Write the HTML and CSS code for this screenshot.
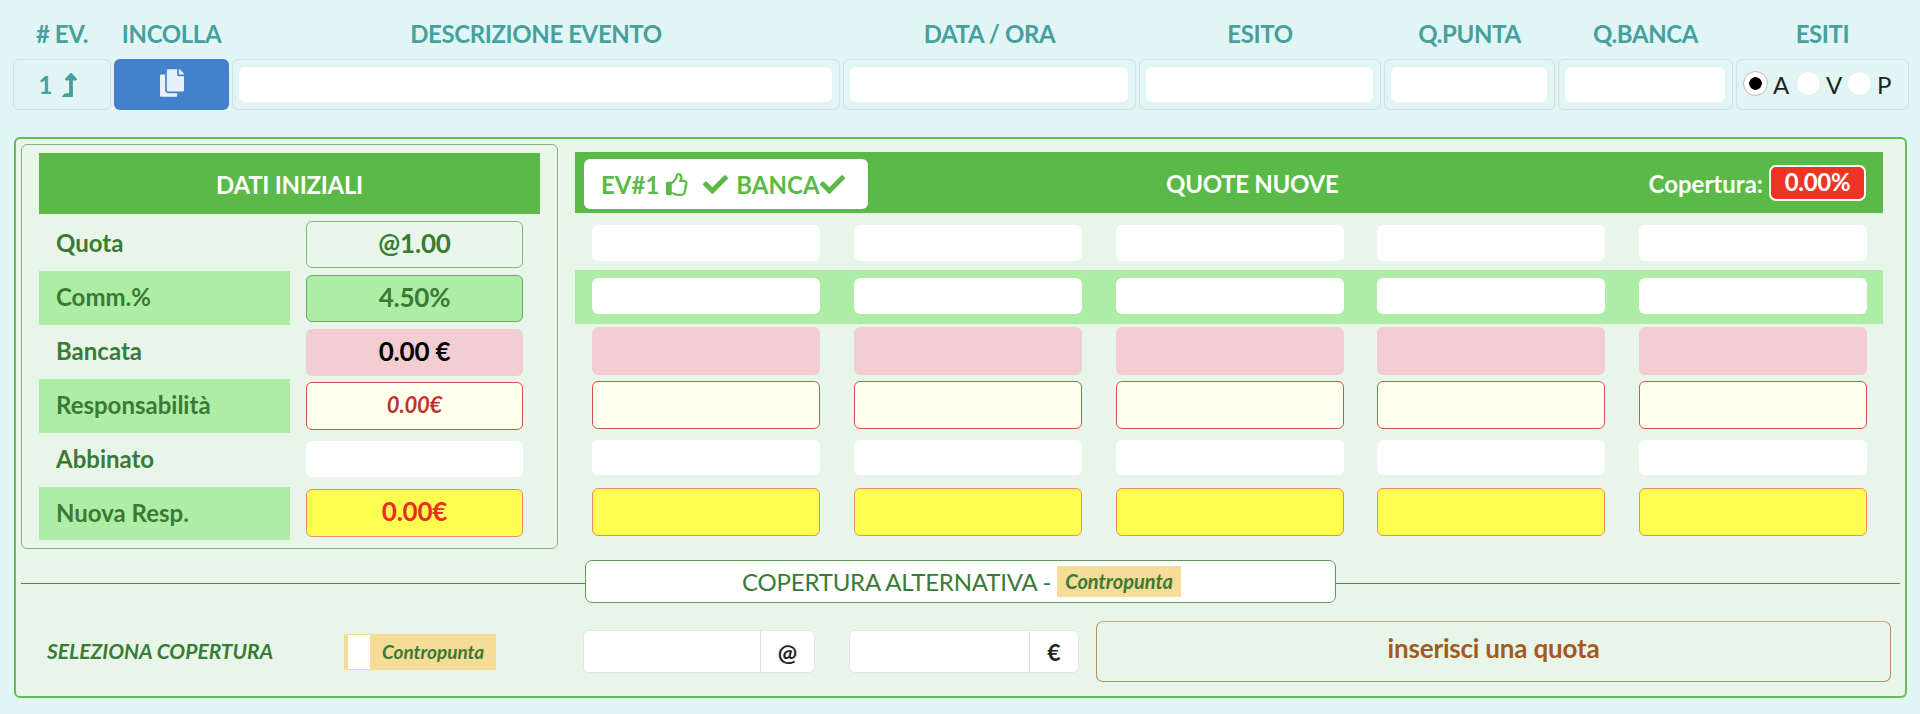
FILE: index.html
```html
<!DOCTYPE html>
<html lang="it">
<head>
  <meta charset="UTF-8">
  <title>Copertura eventi</title>
  <link rel="stylesheet" href="styles.css">
</head>
<body>
  <div class="event-table">
    <div class="event-head">
      <span># EV.</span>
      <span>INCOLLA</span>
      <span>DESCRIZIONE EVENTO</span>
      <span>DATA / ORA</span>
      <span>ESITO</span>
      <span>Q.PUNTA</span>
      <span>Q.BANCA</span>
      <span>ESITI</span>
    </div>
    <div class="event-row">
      <div class="cell cell-num">1
        <svg class="icon-level" viewBox="0 0 320 512"><path d="M313.553 119.669L209.587 7.666c-9.485-10.214-25.676-10.229-35.174 0L70.438 119.669C56.232 134.969 67.062 160 88.025 160H152v272H68.024a11.996 11.996 0 0 0-8.485 3.515l-56 56C-4.021 499.074 1.333 512 12.024 512H208c13.255 0 24-10.745 24-24V160h63.966c20.878 0 31.851-24.969 17.587-40.331z"/></svg>
      </div>
      <button class="paste-btn" type="button">
        <svg class="icon-copy" viewBox="0 0 448 512"><path d="M320 448v40c0 13.255-10.745 24-24 24H24c-13.255 0-24-10.745-24-24V120c0-13.255 10.745-24 24-24h72v296c0 30.879 25.121 56 56 56h168zm0-344V0H152c-13.255 0-24 10.745-24 24v368c0 13.255 10.745 24 24 24h272c13.255 0 24-10.745 24-24V128H344c-13.2 0-24-10.8-24-24zm120.971-31.029L375.029 7.029A24 24 0 0 0 358.059 0H352v96h96v-6.059a24 24 0 0 0-7.029-16.97z"/></svg>
      </button>
      <div class="cell"><input type="text"></div>
      <div class="cell"><input type="text"></div>
      <div class="cell"><input type="text"></div>
      <div class="cell"><input type="text"></div>
      <div class="cell"><input type="text"></div>
      <div class="cell cell-esiti">
        <input class="radio" type="radio" name="esito" checked><label>A</label>
        <input class="radio" type="radio" name="esito"><label>V</label>
        <input class="radio" type="radio" name="esito"><label>P</label>
      </div>
    </div>
  </div>

  <div class="panel">
    <div class="panel-top">
      <div class="initial-box">
        <div class="bar bar-center">DATI INIZIALI</div>
        <div class="data-row"><div class="data-label">Quota</div><div class="val val-quota">@1.00</div></div>
        <div class="data-row"><div class="data-label band">Comm.%</div><div class="val val-comm">4.50%</div></div>
        <div class="data-row"><div class="data-label">Bancata</div><div class="val val-bank">0.00 €</div></div>
        <div class="data-row"><div class="data-label band">Responsabilità</div><div class="val val-resp up1">0.00€</div></div>
        <div class="data-row"><div class="data-label">Abbinato</div><div class="val val-match"></div></div>
        <div class="data-row last"><div class="data-label band">Nuova Resp.</div><div class="val val-new">0.00€</div></div>
      </div>

      <div class="quotes">
        <div class="bar bar-quotes">
          <div class="ev-badge">EV#1
            <svg class="icon-thumb" viewBox="0 0 512 512"><path d="M466.27 286.69C475.04 271.84 480 256 480 236.85c0-44.015-37.218-85.58-85.82-85.58H357.7c4.92-12.81 8.85-28.13 8.85-46.54C366.55 31.936 328.86 0 271.28 0c-61.607 0-58.093 94.933-71.76 108.6-22.747 22.747-49.615 66.447-68.76 83.4H32c-17.673 0-32 14.327-32 32v240c0 17.673 14.327 32 32 32h64c14.893 0 27.408-10.174 30.978-23.95 44.509 1.001 75.06 39.94 177.802 39.94 7.22 0 15.22.01 22.22.01 77.117 0 111.986-39.423 111.034-95.33 13.319-18.425 20.299-43.122 17.34-66.99 9.854-18.452 13.664-40.343 8.99-62.99zm-61.75 53.83c12.56 21.13 1.26 49.41-13.94 57.57 7.7 48.78-17.608 65.9-53.12 65.9h-37.82c-71.639 0-118.029-37.82-171.64-37.82V240h10.92c28.36 0 67.98-70.89 94.54-97.46 28.36-28.36 18.91-75.63 37.82-94.54 47.27 0 47.27 32.98 47.27 56.73 0 39.17-28.36 56.72-28.36 94.54h103.99c20.64 0 36.89 18.49 36.98 37 .09 18.5-12.55 37-31.46 37 14 10 18 50 4.8 67.25z"/></svg>
            <svg class="icon-check first" viewBox="0 0 512 512"><path d="M173.898 439.404l-166.4-166.4c-9.997-9.997-9.997-26.206 0-36.204l36.203-36.204c9.997-9.998 26.207-9.998 36.204 0L192 312.69 432.095 72.596c9.997-9.997 26.207-9.997 36.204 0l36.203 36.204c9.997 9.997 9.997 26.206 0 36.204l-294.4 294.401c-9.998 9.997-26.207 9.997-36.204-.001z"/></svg>
            BANCA<svg class="icon-check" viewBox="0 0 512 512"><path d="M173.898 439.404l-166.4-166.4c-9.997-9.997-9.997-26.206 0-36.204l36.203-36.204c9.997-9.998 26.207-9.998 36.204 0L192 312.69 432.095 72.596c9.997-9.997 26.207-9.997 36.204 0l36.203 36.204c9.997 9.997 9.997 26.206 0 36.204l-294.4 294.401c-9.998 9.997-26.207 9.997-36.204-.001z"/></svg>
          </div>
          <div class="bar-title">QUOTE NUOVE</div>
          <div class="coverage">Copertura: <span class="coverage-pct">0.00%</span></div>
        </div>
        <div class="q-row q-plain"><input type="text"><input type="text"><input type="text"><input type="text"><input type="text"></div>
        <div class="q-row q-band"><input type="text"><input type="text"><input type="text"><input type="text"><input type="text"></div>
        <div class="q-row q-bank"><div></div><div></div><div></div><div></div><div></div></div>
        <div class="q-row q-resp"><div></div><div></div><div></div><div></div><div></div></div>
        <div class="q-row q-match"><div></div><div></div><div></div><div></div><div></div></div>
        <div class="q-row q-new"><div></div><div></div><div></div><div></div><div></div></div>
      </div>
    </div>

    <div class="alt-divider">
      <div class="alt-line"></div>
      <div class="alt-title">COPERTURA ALTERNATIVA - <span class="tag">Contropunta</span></div>
      <div class="alt-line"></div>
    </div>

    <div class="alt-row">
      <div class="alt-label">SELEZIONA COPERTURA</div>
      <div class="switch"><span class="knob"></span><span class="switch-text">Contropunta</span></div>
      <div class="group group-quota"><input type="text"><span>@</span></div>
      <div class="group group-euro"><input type="text"><span>€</span></div>
      <div class="result">inserisci una quota</div>
    </div>
  </div>
</body>
</html>
```

FILE: styles.css
```css
* { box-sizing: border-box; }
body { margin: 0; background: #e2f5f5; font-family: "Lato", sans-serif; font-weight: 700; color: #3a7a35; }
input { display: block; margin: 0; border: 0; outline: 0; background: #fff; border-radius: 6px; }

/* riga evento */
.event-table { padding: 0 11px 0 13px; }
.event-head, .event-row { display: grid; grid-template-columns: 98px 115px 608px 293px 242px 171px 175px 173px; column-gap: 3px; }
.event-head { height: 59px; padding-top: 20px; color: #45a09e; font-size: 24px; line-height: 27px; text-align: center; letter-spacing: -0.4px; }
.event-row { height: 51px; }
.cell { display: flex; align-items: center; padding: 0 7px 0 6px; border: 1px solid #d3dfe0; border-radius: 6px; }
.cell input { width: 100%; height: 35px; }
.cell-num { justify-content: center; gap: 10px; padding-right: 14px; color: #45a09e; font-size: 24px; }
.icon-level { width: 15px; height: 24px; margin-top: 1px; fill: #45a09e; }
.paste-btn { display: flex; align-items: center; justify-content: center; padding: 0 0 4px; border: 0; border-radius: 6px; background: #4481cc; }
.icon-copy { width: 24px; height: 28px; fill: #e8f0fb; }
.cell-esiti { padding: 0 0 0 6px; color: #222; font-size: 24px; font-weight: 400; }
.cell-esiti label { width: 23px; margin-left: 5px; margin-top: -1px; }
.cell-esiti label:nth-of-type(2) { width: 21px; }
.cell input.radio { appearance: none; flex: none; width: 25px; height: 25px; margin: -3px 0 0; border: 1px solid #e6ecec; border-radius: 50%; background: #fff; }
.cell input.radio:checked { border-color: #bbb; background: radial-gradient(circle, #000 0 6px, #fff 6.6px); }

/* pannello */
.panel { height: 561px; margin: 27px 13px 0 14px; padding: 5px 5px 0; border: 2px solid #62bd58; border-radius: 6px; background: #e8f6e9; }
.panel-top { display: flex; gap: 17px; }
.bar { background: #5ab947; color: #fff; font-size: 24px; letter-spacing: -0.3px; }
.bar-center { display: flex; align-items: center; justify-content: center; height: 61px; padding-top: 2px; }

.initial-box { width: 537px; height: 405px; padding: 8px 17px 0; border: 1px solid #86b085; border-radius: 6px; }
.initial-box .bar { margin-bottom: 3px; }
.data-row { display: flex; gap: 16px; height: 54px; }
.data-row.last { height: 53px; }
.data-label { display: flex; align-items: center; width: 251px; padding: 0 0 3px 17px; font-size: 24px; }
.band { background: #aeeda6; }
.val { display: flex; align-items: center; justify-content: center; width: 217px; height: 47px; margin-top: 4px; padding-bottom: 4px; border: 1px solid transparent; border-radius: 6px; font-size: 26px; letter-spacing: -0.2px; }
.val-quota { border-color: #86b085; }
.val-comm { background: #aeeda6; border-color: #6ea56a; }
.val-bank { background: #f2cdd2; color: #000; }
.val-resp { background: #ffffee; border-color: #d2534a; color: #c0322d; font-size: 22px; font-style: italic; }
.up1 { height: 48px; margin-top: 3px; }
.val-match { height: 36px; margin-top: 8px; background: #fff; }
.val-new { height: 48px; margin-top: 2px; background: #ffff50; border-color: #ef8a6a; color: #ea2e24; }

/* quote nuove */
.quotes { width: 1308px; margin-top: 8px; }
.bar-quotes { display: flex; align-items: center; height: 61px; padding: 0 17px 0 9px; }
.ev-badge { display: flex; align-items: center; flex: none; width: 284px; height: 50px; margin-top: 3px; padding-left: 17px; border-radius: 6px; background: #fff; color: #5ab947; letter-spacing: 0; }
.icon-thumb { width: 23px; height: 23px; margin-left: 7px; fill: #5ab947; }
.icon-check { width: 25px; height: 25px; fill: #5ab947; }
.icon-check.first { margin: 0 8px 0 14px; }
.bar-title { flex: 1; padding-right: 12px; padding-top: 2px; text-align: center; }
.coverage { display: flex; align-items: center; gap: 6px; padding-top: 1px; font-size: 24px; letter-spacing: 0; }
.coverage-pct { display: block; width: 97px; height: 36px; border: 2px solid #fff; border-radius: 7px; background: #ee3524; text-align: center; line-height: 30px; font-size: 24px; letter-spacing: -0.3px; }

.q-row { display: grid; grid-template-columns: repeat(5, 228px); column-gap: 33.75px; padding-left: 17px; }
.q-row input, .q-row div { width: 100%; border-radius: 6px; }
.q-plain { padding-top: 12px; padding-bottom: 9px; }
.q-plain input, .q-band input { height: 36px; }
.q-band { padding-top: 8px; padding-bottom: 10px; background: #aeeda6; }
.q-bank { padding-top: 3px; padding-bottom: 3px; }
.q-bank div { height: 48px; background: #f2cdd2; }
.q-resp { padding-top: 3px; padding-bottom: 3px; }
.q-resp div { height: 48px; background: #ffffee; border: 1px solid #d2534a; }
.q-match { padding-top: 8px; padding-bottom: 13px; }
.q-match div { height: 35px; background: #fff; }
.q-new div { height: 48px; background: #ffff50; border: 1px solid #ef8a6a; }

/* copertura alternativa */
.alt-divider { display: flex; align-items: center; margin-top: 11px; }
.alt-line { flex: 1; height: 1px; margin-top: 3px; background: #4f8a4b; }
.alt-title { display: flex; align-items: center; justify-content: center; gap: 6px; width: 751px; height: 43px; padding-left: 2px; border: 1px solid #5f9a5b; border-radius: 7px; background: #fff; font-size: 24px; font-weight: 400; letter-spacing: -0.2px; }
.tag { display: block; padding: 0 8px; background: #f5dc97; font-size: 20px; font-weight: 700; font-style: italic; line-height: 31px; letter-spacing: 0; }

.alt-row { display: flex; align-items: center; height: 61px; margin-top: 18px; padding-left: 26px; }
.alt-label { width: 297px; padding-bottom: 2px; font-size: 21px; font-style: italic; }
.switch { display: flex; align-items: center; width: 152px; height: 36px; padding-left: 4px; background: #f5dc97; }
.knob { width: 22px; height: 34px; background: #fff; }
.switch-text { margin-left: 12px; font-size: 19px; font-style: italic; }
.group { display: flex; height: 43px; border: 1px solid #e2e6e4; border-radius: 6px; background: #fff; color: #222; font-size: 23px; }
.group input { flex: 1; min-width: 0; height: 41px; border-right: 1px solid #dcdfdd; border-radius: 6px 0 0 6px; }
.group span { display: flex; align-items: center; justify-content: center; flex: none; width: 53px; }
.group-quota { width: 232px; margin-left: 87px; }
.group-euro { width: 230px; margin-left: 34px; }
.group-euro span { width: 48px; }
.result { display: flex; align-items: center; justify-content: center; width: 795px; height: 61px; margin-left: 17px; padding-bottom: 7px; border: 1px solid #bd8a5a; border-top-color: #c9a882; border-radius: 7px; color: #a35a20; font-size: 26px; letter-spacing: -0.2px; }
```
